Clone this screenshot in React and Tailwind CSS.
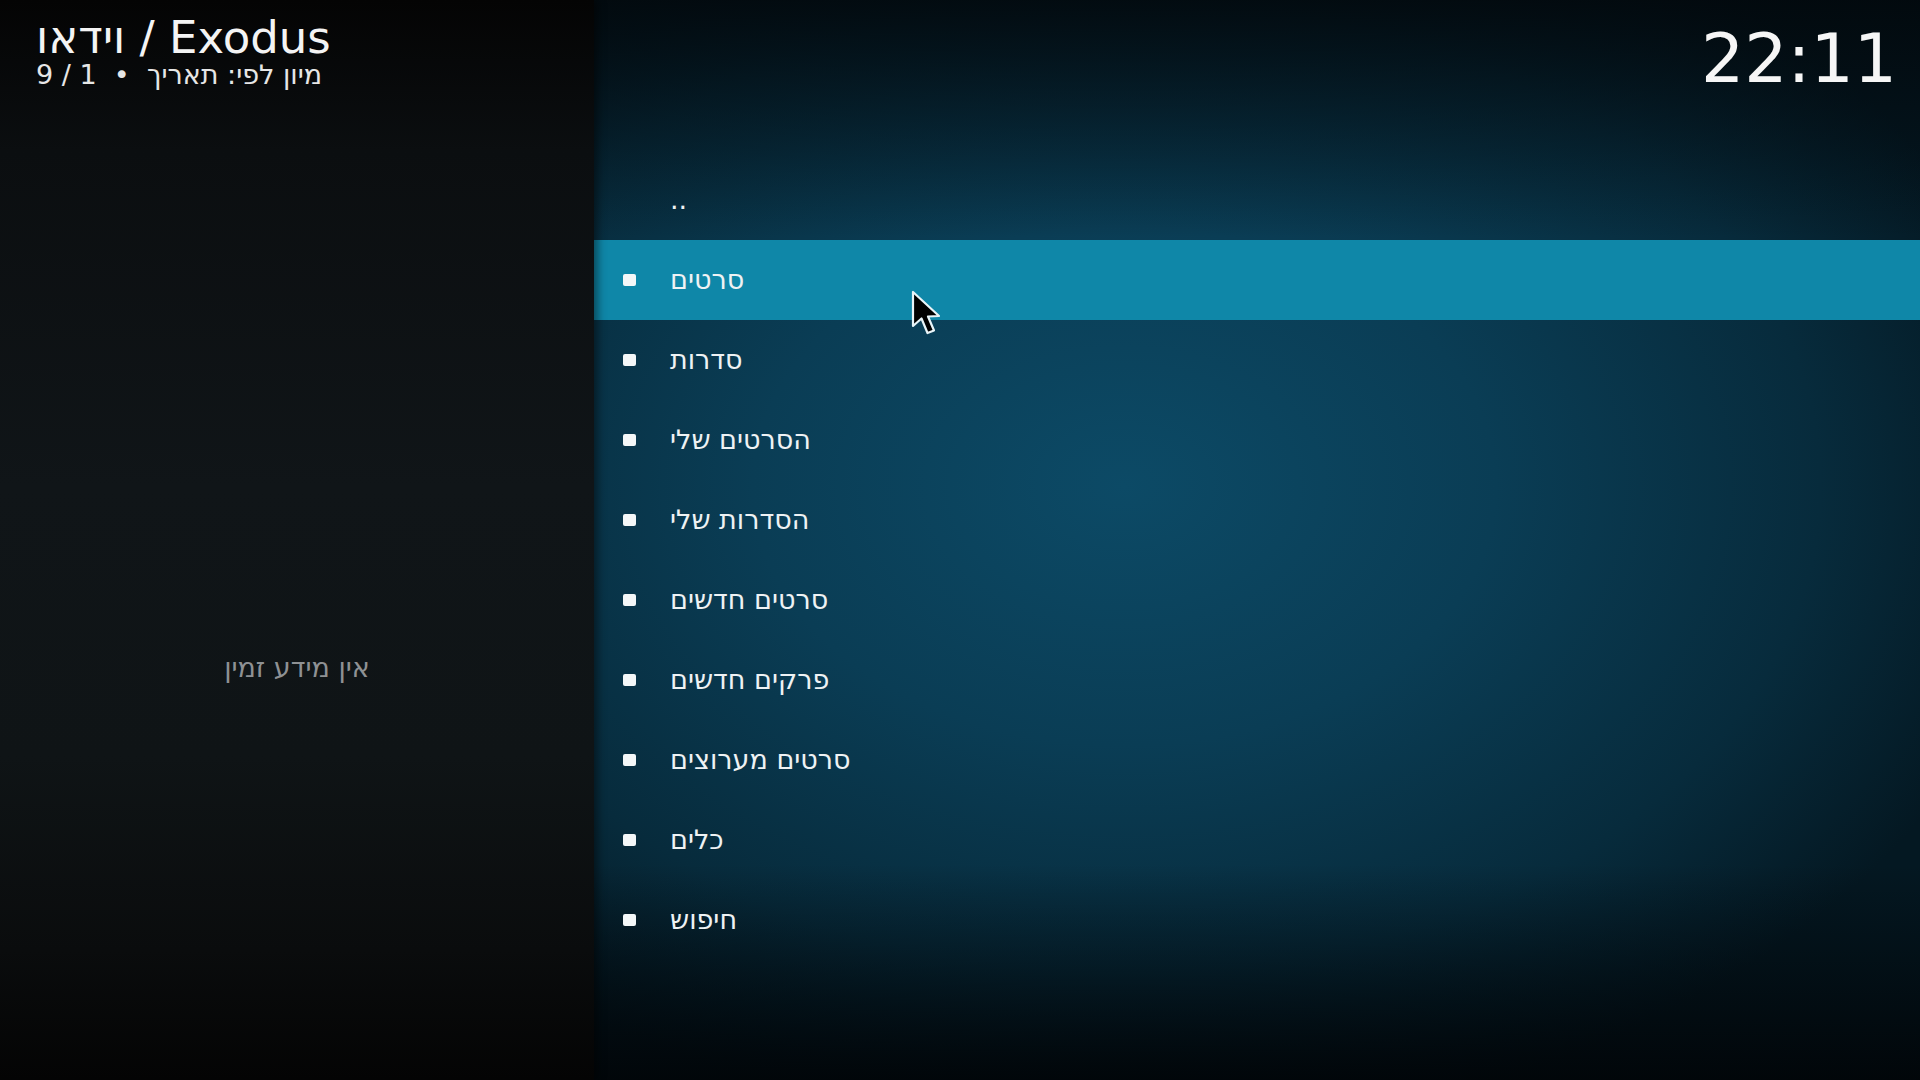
const items = [
  "סרטים",
  "סדרות",
  "הסרטים שלי",
  "הסדרות שלי",
  "סרטים חדשים",
  "פרקים חדשים",
  "סרטים מערוצים",
  "כלים",
  "חיפוש",
]

const font = { fontFamily: '"DejaVu Sans", "Noto Sans", sans-serif' }

const Cursor = () => (
  <svg
    className="absolute left-[910px] top-[290px] pointer-events-none"
    width="34"
    height="48"
    viewBox="0 0 34 48"
  >
    <path
      d="M3 2 L3 36 L11.5 28.5 L17.5 43 L24 40.5 L18 26.5 L29 26 Z"
      fill="#000"
      stroke="#e8f4f8"
      strokeWidth="2.2"
      strokeLinejoin="round"
    />
  </svg>
)

const ListRow = ({ label, selected }) => (
  <div
    className={`h-[80px] flex items-center ${selected ? "bg-[#0f87a8]" : ""}`}
  >
    <div className="w-[13px] h-[12px] ml-[29px] rounded-[2px] bg-[#f4f7f8]" />
    <div className="ml-[34px] text-[27px] text-[#eef2f4]">{label}</div>
  </div>
)

export default function App() {
  return (
    <div
      className="relative w-[1920px] h-[1080px] flex overflow-hidden bg-black"
      style={font}
    >
      <aside className="w-[594px] h-full flex flex-col bg-[linear-gradient(180deg,#040404_0%,#0b0e10_14%,#101518_45%,#0f1416_70%,#0a0c0d_88%,#040404_100%)] shadow-[4px_0_8px_rgba(0,0,0,0.45)] z-10">
        <div className="pl-[36px] pt-[14px]">
          <div className="text-[45px] leading-[48px] text-[#f4f4f4]">
            וידאו / Exodus
          </div>
          <div
            dir="rtl"
            className="inline-block text-[27px] leading-[26px] text-[#e6e6e6]"
          >
            מיון לפי: תאריך&nbsp;&nbsp;•&nbsp;&nbsp;1 / 9
          </div>
        </div>
        <div className="flex-1 flex items-center justify-center pt-[166px]">
          <div className="text-[27px] text-[#8e9194]">אין מידע זמין</div>
        </div>
      </aside>

      <main className="relative flex-1 h-full flex flex-col bg-[linear-gradient(180deg,rgba(2,8,12,0.9)_0%,rgba(2,8,12,0)_22%,rgba(2,8,12,0)_80%,rgba(1,5,8,0.95)_100%),radial-gradient(ellipse_70%_60%_at_40%_45%,#0c4a66_0%,#0a3d55_40%,#072b3c_75%,#041822_100%)]">
        <div className="h-[160px] flex justify-end pr-[23px] pt-[19px]">
          <div className="h-[80px] text-[68px] leading-[80px] text-[#f6f6f6]">22:11</div>
        </div>
        <div className="h-[80px] flex items-center">
          <div className="ml-[76px] text-[27px] text-[#eef2f4]">..</div>
        </div>
        {items.map((label, i) => (
          <ListRow key={label} label={label} selected={i === 0} />
        ))}
      </main>

      <Cursor />
    </div>
  )
}
